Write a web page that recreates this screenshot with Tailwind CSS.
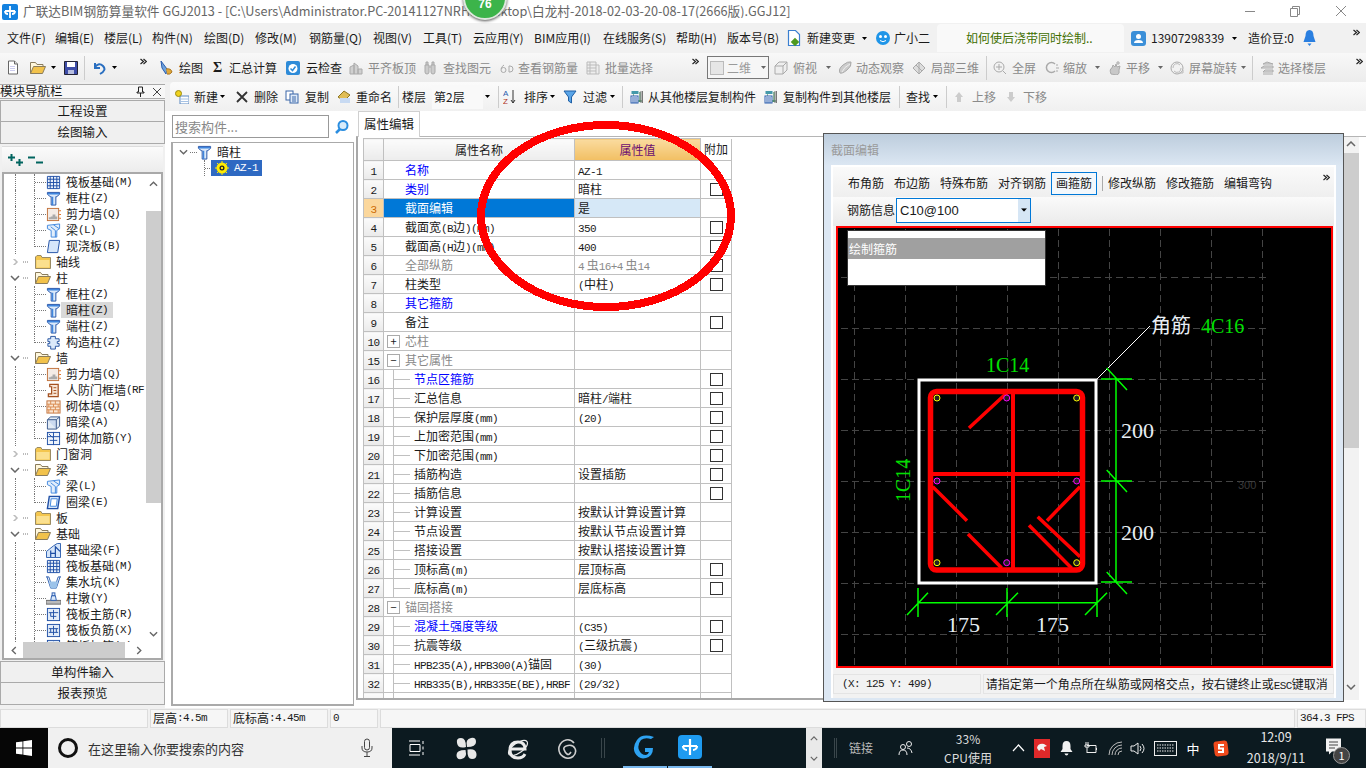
<!DOCTYPE html>
<html lang="zh">
<head>
<meta charset="utf-8">
<title>广联达BIM钢筋算量软件</title>
<script src="https://cdn.jsdelivr.net/npm/@tailwindcss/browser@4"></script>
</head>
<body class="m-0 overflow-hidden bg-[#f0f0f0]">
<svg class="hidden">
<symbol id="col" viewBox="0 0 16 16"><path d="M1.5 1.5h13v2l-3 2.5h-1v9h-5V6h-1l-3-2.5z" fill="#dbe9fa" stroke="#1f4fa5"/><path d="M2 3h12M7 6v9" stroke="#3f86de" stroke-width="1.5"/></symbol>
<symbol id="raft" viewBox="0 0 16 16"><path d="M1.5 1.5h13v13h-13zM4.5 1.5v13M8 1.5v13M11.5 1.5v13M1.5 4.5h13M1.5 8h13M1.5 11.5h13" fill="#e8f0fa" stroke="#1f4fa5"/></symbol>
<symbol id="wall" viewBox="0 0 16 16"><rect x="1.500" y="1.500" width="12" height="13" fill="#f4ece6" stroke="#c0703a"/><path d="M3 13h9v-3h-2v-2h-3v2H5v1H3z" fill="#aaa"/><path d="M14 4h2M14 8h2M14 12h2" stroke="#e06b1a"/></symbol>
<symbol id="beam" viewBox="0 0 16 16"><path d="M1.500 2.500 14.500 1v5l-3 2v7h-6V8L1.500 6z" fill="#e2eefb" stroke="#3f86de"/><path d="M5 4l5 4v7M8 2l6 4" stroke="#3f86de" fill="none"/></symbol>
<symbol id="slab" viewBox="0 0 16 16"><path d="M3.500 1.500h11l-2 13h-11z" fill="#d6e6fa" stroke="#1f4fa5"/></symbol>
<symbol id="ql" viewBox="0 0 16 16"><path d="M3.500 1.500h11l-2 13h-11z" fill="#d6e6fa" stroke="#1f4fa5" stroke-width="1.500"/><path d="M5.500 4h6.500l-1 8H4.500z" fill="#fff" stroke="#3f86de"/></symbol>
<symbol id="gz" viewBox="0 0 16 16"><path d="M5 1.500h5v2.500h4v3h-2v2h2v3h-4v3H5v-3H2V9h2V7H2V4h3z" fill="#dbe9fa" stroke="#25529f"/></symbol>
<symbol id="rfm" viewBox="0 0 16 16"><path d="M4 1.500h9v13H2.500v-3H6V4H4z" fill="#f8e5d5" stroke="#a4501f" stroke-width="1.300"/><path d="M8 5h3M8 8h3M8 11h3" stroke="#a4501f"/></symbol>
<symbol id="brick" viewBox="0 0 16 16"><rect x="1" y="2" width="14" height="13" fill="#fbe6d2" stroke="#c0703a"/><path d="M1 5.500h14M1 8.500h14M1 11.500h14M5 2v3.500M10 2v3.500M3 5.500v3M8 5.500v3M13 5.500v3M5 8.500v3M10 8.500v3M3 11.500v3.500M8 11.500v3.500M13 11.500v3.500" stroke="#d98a4f" fill="none"/></symbol>
<symbol id="anl" viewBox="0 0 16 16"><path d="M1.500 5 5 2h9.500v10L11 15H1.500z" fill="#e2ebf5" stroke="#36558a"/><path d="M1.500 5H11v10M11 5l3.500-3" stroke="#36558a" fill="#cbdaf0"/></symbol>
<symbol id="jj" viewBox="0 0 16 16"><rect x="1.500" y="1.500" width="13" height="13" fill="#eef4fb" stroke="#1f4fa5"/><path d="M1 6h14M8 1v14M4 10h8M3 3l4 4" stroke="#1f4fa5"/></symbol>
<symbol id="jcl" viewBox="0 0 16 16"><path d="M0.500 15.500V9L8 3l4-2.500h3.500v15h-15z" fill="#d6e6fa" stroke="#2a5cae"/><path d="M5 15V8M10 15V4l5 5M5 11h5" stroke="#1f4fa5" stroke-width="1.300" fill="none"/></symbol>
<symbol id="jsk" viewBox="0 0 16 16"><path d="M0 2h3l2 6h6l2-6h3M1 2l4 12h6l4-12" fill="none" stroke="#2a5cae"/><path d="M3 7h10l-2 7H5z" fill="#9cc3ea"/></symbol>
<symbol id="zd" viewBox="0 0 16 16"><rect x="0" y="10" width="16" height="4" fill="#bbb" stroke="#666"/><path d="M5 10l1-5h4l1 5z" fill="#dbe9fa" stroke="#2a5cae"/><rect x="6.500" y="2" width="3" height="3" fill="#dbe9fa" stroke="#2a5cae"/></symbol>
<symbol id="zj" viewBox="0 0 16 16"><rect x="1.500" y="1.500" width="13" height="13" fill="#e2ecf8" stroke="#1f4fa5"/><path d="M3 6h10M8 3v10M5 10V6M11 10h-6" stroke="#1f4fa5" fill="none"/></symbol>
<symbol id="fj" viewBox="0 0 16 16"><rect x="1.500" y="1.500" width="13" height="13" fill="#e2ecf8" stroke="#1f4fa5"/><path d="M3 6h10M3 10h10M8 3v10M5 6v4M11 6v4" stroke="#1f4fa5" fill="none"/></symbol>
<symbol id="fc" viewBox="0 0 16 16"><path d="M.500 3V14.500h15v-11H7L6 1.500H2z" fill="#f4c64e" stroke="#9a8b63"/><path d="M1.500 6h13v7.500h-13z" fill="#fbe08e"/></symbol>
<symbol id="fo" viewBox="0 0 16 16"><path d="M.500 13.500V2.500h5l1.500 2h6v3" fill="#fff7dc" stroke="#8a7c5c"/><path d="M.500 13.500l3-7h12l-3 7z" fill="#f2c24b" stroke="#8a7c5c"/></symbol>
<symbol id="dn" viewBox="0 0 5 3"><path d="M0 0h5L2.500 3z"/></symbol>
<symbol id="g1" viewBox="0 0 14 14"><path d="M1 13V6l4-2v9zM5 13V2l4 3v8zM9 13V8h4v5z" fill="#d0d0d0" stroke="#aaa"/></symbol>
<symbol id="g2" viewBox="0 0 14 14"><path d="M2 4h4v7a2 2 0 0 1-4 0zM8 4h4v7a2 2 0 0 1-4 0zM3 4V1h2v3M9 4V1h2v3M6 6h2" fill="#ccc" stroke="#aaa"/></symbol>
<symbol id="g3" viewBox="0 0 14 14"><circle cx="3.500" cy="9" r="2.500" fill="none" stroke="#aaa"/><path d="M4 4q-2 1-3 4M9 5v6h1q3 0 3-3t-3-3z" fill="none" stroke="#aaa"/></symbol>
<symbol id="g4" viewBox="0 0 14 14"><path d="M1 1h9v12H1zM1 4h9M1 7h9M1 10h9M4 1v12M10 4h3v9h-3" fill="#eee" stroke="#bbb"/></symbol>
<symbol id="g5" viewBox="0 0 14 14"><path d="M1 5l4-4h8v8l-4 4H1zM1 5h8v8M9 5l4-4" fill="#eee" stroke="#aaa"/></symbol>
<symbol id="g6" viewBox="0 0 14 14"><path d="M2 12Q0 8 5 4t8-3q1 4-4 8t-7 3z" fill="#ccc" stroke="#aaa"/><path d="M4 11q2-5 8-8" stroke="#eee" fill="none"/></symbol>
<symbol id="g7" viewBox="0 0 14 14"><path d="M7 1l6 6-6 6-6-6z" fill="#ddd" stroke="#aaa"/><path d="M4 4l6 6M7 1v12" stroke="#aaa"/></symbol>
<symbol id="g8" viewBox="0 0 14 14"><circle cx="6" cy="6" r="5" fill="#f2f2f2" stroke="#aaa"/><path d="M6 3v6M3 6h6M10 10l3 3" stroke="#aaa"/></symbol>
<symbol id="g9" viewBox="0 0 14 14"><path d="M10 3a5 5 0 1 0 0 7" fill="none" stroke="#aaa" stroke-width="1.500"/><path d="M11 4h2M11 7h3M11 10h2" stroke="#aaa"/></symbol>
<symbol id="g10" viewBox="0 0 14 14"><path d="M3 13q-2-5 1-6l1-3 2 2 1-3 1 3 3-1-1 4q1 4-2 5z" fill="#c8c8c8" stroke="#aaa"/><path d="M10 0v4M8 2h4" stroke="#aaa"/></symbol>
<symbol id="g11" viewBox="0 0 14 14"><circle cx="7" cy="7" r="6" fill="#f2f2f2" stroke="#aaa"/><path d="M3 7a4 4 0 0 1 7-3M11 7a4 4 0 0 1-7 3M9 12h4v-3" fill="none" stroke="#bbb"/></symbol>
<symbol id="g12" viewBox="0 0 14 14"><path d="M3 3l4-2 6 2H3zM1 7l3-2h9v2zM3 11l2-2h8v2zM3 13h10" fill="#ddd" stroke="#aaa"/></symbol>
<symbol id="ck" viewBox="0 0 7 7"><path d="M.500 1 3.500 3.500.500 6M3.500 1 6.500 3.500 3.500 6" fill="none" stroke="#222" stroke-width="1.200"/></symbol>
<symbol id="cu" viewBox="0 0 10 6"><path d="M1 5l4-4 4 4" fill="none" stroke="#666" stroke-width="1.500"/></symbol>
<symbol id="cd" viewBox="0 0 10 6"><path d="M1 1l4 4 4-4" fill="none" stroke="#666" stroke-width="1.500"/></symbol>
<symbol id="cl" viewBox="0 0 6 10"><path d="M5 1L1 5l4 4" fill="none" stroke="#666" stroke-width="1.500"/></symbol>
<symbol id="cr" viewBox="0 0 6 10"><path d="M1 1l4 4-4 4" fill="none" stroke="#666" stroke-width="1.500"/></symbol>
<symbol id="sdoc" viewBox="0 0 14 14"><path d="M2.500 .500h6l3 3v10h-9z" fill="#fff" stroke="#666"/><path d="M8.500 .500v3h3" fill="#ddd" stroke="#666"/><path d="M4 6h5M4 8h5M4 10h5" stroke="#cce"/></symbol>
<symbol id="srow" viewBox="0 0 14 14"><rect x="2.500" y="1" width="7" height="3" fill="#49a" /><path d="M4 5h1M11 2v10M9 11h4" stroke="#1a6f3a"/><rect x="2" y="6" width="7" height="7" fill="#fff" stroke="#2a5cae"/><path d="M3 8h5M3 10h5M3 12h5" stroke="#2a5cae"/><path d="M12 1v12M13.500 1v12" stroke="#777"/></symbol>
</svg>

<div class="relative w-[1366px] h-[768px] overflow-hidden flex flex-col text-xs leading-none text-[#1a1a1a] font-['Noto_Sans_CJK_SC','Liberation_Sans',sans-serif] [&_b]:font-['Liberation_Mono'] [&_b]:text-[11px] [&_b]:tracking-[-0.6px] [&_b]:leading-[10px] [&_b]:font-normal">

  <!-- title bar -->
  <div class="h-[23px] shrink-0 bg-white flex items-center text-[12.700px] text-[#666] whitespace-nowrap">
    <svg class="w-4 h-4 shrink-0 ml-[2px] mr-[5px]" viewBox="0 0 16 16"><rect width="16" height="16" rx="2" fill="#1382e0"/><path d="M8 2v12M3 7h10M3 7a3 3 0 0 0 3 3M13 7a3 3 0 0 1-3 3" stroke="#fff" stroke-width="1.800" fill="none"/></svg>
    <span class="w-[1187px] shrink-0 overflow-hidden">广联达BIM钢筋算量软件 GGJ2013 - [C:\Users\Administrator.PC-20141127NRHI\Desktop\白龙村-2018-02-03-20-08-17(2666版).GGJ12]</span>
    <svg class="w-[120px] h-[23px] shrink-0 ml-[28px]" viewBox="0 0 120 23"><path d="M7 11.500h10" stroke="#888"/><path d="M52.500 8.500h7v8h-7zM54.500 8.500V6.500h7v8h-2" fill="none" stroke="#888"/><path d="M98 6l10 10M108 6L98 16" stroke="#888"/></svg>
  </div>

  <!-- menu bar -->
  <div class="h-[30px] shrink-0 bg-[#f1f1f1] flex items-center whitespace-nowrap [&>span]:flex [&>span]:items-center [&>span]:shrink-0">
    <span class="w-[55px] pl-[7px]">文件(F)</span><span class="w-[49px]">编辑(E)</span><span class="w-[48px]">楼层(L)</span><span class="w-[52px]">构件(N)</span><span class="w-[51px]">绘图(D)</span><span class="w-[54px]">修改(M)</span><span class="w-[64px]">钢筋量(Q)</span><span class="w-[50px]">视图(V)</span><span class="w-[50px]">工具(T)</span><span class="w-[61px]">云应用(Y)</span><span class="w-[69px]">BIM应用(I)</span><span class="w-[73px]">在线服务(S)</span><span class="w-[51px]">帮助(H)</span><span class="w-[60px]">版本号(B)</span>
    <span class="w-[20px]"><svg class="w-[14px] h-[18px]" viewBox="0 0 14 18"><path d="M1.500 1.500h7l4 4v11h-11z" fill="#fff" stroke="#3a7fd0" stroke-width="1.200"/><rect x="5" y="10" width="6" height="6" transform="rotate(45 8 13)" fill="#4e9a20"/></svg></span>
    <span class="w-[68px]">新建变更<svg class="w-[5px] h-[3px] ml-[7px]"><use href="#dn"/></svg></span>
    <span class="w-[19px]"><svg class="w-4 h-4" viewBox="0 0 16 16"><circle cx="8" cy="8" r="7" fill="#1f95e8"/><circle cx="5.500" cy="6.500" r="1.500" fill="#fff"/><circle cx="10.500" cy="6.500" r="1.500" fill="#fff"/><path d="M5 10.500q3 2.500 6 0" stroke="#fff" fill="none"/></svg></span>
    <span class="w-[43px]">广小二</span>
    <span class="w-[187px] h-7 bg-[#f9f9f9] rounded-t-sm pl-[29px] text-[#3f6f00]">如何使后浇带同时绘制..</span>
    <span class="w-[7px]"></span>
    <span class="w-[20px]"><svg class="w-[15px] h-[15px]" viewBox="0 0 15 15"><rect width="15" height="15" rx="3" fill="#3b8fd8"/><circle cx="7.500" cy="5.500" r="2.500" fill="#fff"/><path d="M3 12q0-3 4.500-3t4.500 3z" fill="#fff"/></svg></span>
    <span class="w-[97px]">13907298339<svg class="w-[5px] h-[3px] ml-[8px]"><use href="#dn"/></svg></span>
    <span class="w-[55px]">造价豆:0</span>
    <span class="w-[50px]"><svg class="w-[13px] h-[17px]" viewBox="0 0 13 17"><path d="M6.500 0q4 0 4 6l2 6H.500l2-6q0-6 4-6z" fill="#2a7fe0"/><path d="M4.500 13.500h4L6.500 16z" fill="#2a7fe0"/></svg></span>
    <span class="w-[8px]"><svg class="w-[7px] h-[7px] -mt-3"><use href="#ck"/></svg></span>
  </div>

  <!-- toolbar 1 -->
  <div class="h-[29px] shrink-0 bg-[linear-gradient(#f8f8f8,#ececec)] flex items-center whitespace-nowrap [&>span]:flex [&>span]:items-center [&>span]:shrink-0 [&_svg]:shrink-0">
    <span class="w-[30px] pl-[6px]"><svg class="w-[14px] h-[15px]"><use href="#sdoc"/></svg></span>
    <span class="w-[20px]"><svg class="w-4 h-4"><use href="#fo"/></svg></span>
    <span class="w-[14px]"><svg class="w-[5px] h-[3px] ml-[1px]"><use href="#dn"/></svg></span>
    <span class="w-[20px]"><svg class="w-[14px] h-[14px]" viewBox="0 0 14 14"><path d="M.500 .500h13v13H.500z" fill="#3e4da8" stroke="#223"/><rect x="3" y="1" width="8" height="5" fill="#fff"/><rect x="4" y="9" width="6" height="4" fill="#b8bfe0"/></svg></span>
    <span class="w-[8px]"><i class="w-px h-6 bg-[#ccc]"></i></span>
    <span class="w-[20px]"><svg class="w-[14px] h-[14px]" viewBox="0 0 14 14"><path d="M3 2v5h5" fill="none" stroke="#2a6fc0" stroke-width="2"/><path d="M3 6q4-5 8-1t-3 8" fill="none" stroke="#2a6fc0" stroke-width="2"/></svg></span>
    <span class="w-[28px]"><svg class="w-[5px] h-[3px]"><use href="#dn"/></svg></span>
    <span class="w-[12px]"><svg class="w-[7px] h-[7px] -mt-3"><use href="#ck"/></svg></span>
    <span class="w-[5px]"></span>
    <span class="w-[52px] ml-[2px] gap-[6px]"><svg class="w-[14px] h-4" viewBox="0 0 14 16"><path d="M2 1l6 8-1 5-4-6z" fill="#6fa3dc" stroke="#2a5cae"/><path d="M7 9q5-1 6 3-2 3-5 2" fill="#e0a83a" stroke="#a87420"/></svg>绘图</span>
    <span class="w-[75px]"><i class="w-[18px] not-italic font-['Liberation_Serif'] font-bold text-sm pl-[2px]">Σ</i>汇总计算</span>
    <span class="w-[63px] gap-[6px]"><svg class="w-[14px] h-[14px]" viewBox="0 0 14 14"><rect width="14" height="14" rx="2" fill="#2e8bd8"/><circle cx="7" cy="7.500" r="4.500" fill="#fff"/><path d="M4.500 7.500l2 2 3-4" fill="none" stroke="#2e8bd8" stroke-width="1.500"/></svg>云检查</span>
    <span class="w-[74px] gap-[5px] text-[#8a8a8a]"><svg class="w-[14px] h-[14px]"><use href="#g1"/></svg>平齐板顶</span>
    <span class="w-[77px] gap-[6px] text-[#8a8a8a]"><svg class="w-[14px] h-[14px]"><use href="#g2"/></svg>查找图元</span>
    <span class="w-[86px] gap-[4px] text-[#8a8a8a]"><svg class="w-[14px] h-[14px]"><use href="#g3"/></svg>查看钢筋量</span>
    <span class="w-[100px] gap-[5px] text-[#8a8a8a]"><svg class="w-[14px] h-[14px]"><use href="#g4"/></svg>批量选择</span>
    <span class="w-[21px] pl-[6px]"><svg class="w-[7px] h-[7px] -mt-3"><use href="#ck"/></svg></span>
    <span class="w-[62px] h-[23px] border border-[#777] bg-[#f6f6f6] pl-[2px] gap-[3px] text-[#9a9a9a]"><i class="w-[14px] h-[14px] bg-[#e6e6e6] border border-[#bbb]"></i>二维<svg class="w-[5px] h-[3px] ml-[7px] fill-[#666]"><use href="#dn"/></svg></span>
    <span class="w-[69px] pl-[5px] gap-[5px] text-[#8a8a8a]"><svg class="w-[14px] h-[14px]"><use href="#g5"/></svg>俯视<svg class="w-[5px] h-[3px] ml-[4px] fill-[#666]"><use href="#dn"/></svg></span>
    <span class="w-[74px] gap-[4px] text-[#8a8a8a]"><svg class="w-[14px] h-[14px]"><use href="#g6"/></svg>动态观察</span>
    <span class="w-[72px] gap-[5px] text-[#8a8a8a]"><svg class="w-[14px] h-[14px]"><use href="#g7"/></svg>局部三维</span>
    <span class="w-[9px] pl-[2px]"><i class="w-px h-6 bg-[#ccc]"></i></span>
    <span class="w-[52px] gap-[5px] text-[#8a8a8a]"><svg class="w-[14px] h-[14px]"><use href="#g8"/></svg>全屏</span>
    <span class="w-[63px] gap-[4px] text-[#8a8a8a]"><svg class="w-[14px] h-[14px]"><use href="#g9"/></svg>缩放<svg class="w-[5px] h-[3px] ml-[4px] fill-[#666]"><use href="#dn"/></svg></span>
    <span class="w-[62px] gap-[4px] text-[#8a8a8a]"><svg class="w-[14px] h-[14px]"><use href="#g10"/></svg>平移<svg class="w-[5px] h-[3px] ml-[4px] fill-[#666]"><use href="#dn"/></svg></span>
    <span class="w-[80px] gap-[5px] text-[#8a8a8a]"><svg class="w-[14px] h-[14px]"><use href="#g11"/></svg>屏幕旋转<svg class="w-[5px] h-[3px] -ml-[1px] fill-[#666]"><use href="#dn"/></svg></span>
    <span class="w-[10px] pl-[2px]"><i class="w-px h-6 bg-[#ccc]"></i></span>
    <span class="w-[96px] gap-[4px] text-[#8a8a8a]"><svg class="w-[14px] h-[14px]"><use href="#g12"/></svg>选择楼层</span>
    <span class="w-[10px]"><svg class="w-[7px] h-[7px] -mt-3"><use href="#ck"/></svg></span>
  </div>

  <!-- main -->
  <div class="h-[626px] shrink-0 flex">
    <!-- left module nav -->
    <div class="w-[165px] shrink-0 flex flex-col pt-[2px]">
      <div class="h-[15px] flex items-center justify-between text-[12.500px] bg-[#f7f7f7] border-y border-[#aaa] pr-[4px]"><span>模块导航栏</span><span class="flex items-center gap-[8px]"><svg class="w-[9px] h-[11px]" viewBox="0 0 9 11"><path d="M2.500 1h4v5h1.500v1H1V6h1.500zM4.500 7v4" stroke="#222" fill="none"/></svg><svg class="w-[8px] h-[8px]" viewBox="0 0 8 8"><path d="M0 0l8 8M8 0L0 8" stroke="#444"/></svg></span></div>
      <div class="h-[22px] mt-[1px] shrink-0 flex items-center justify-center bg-[#f0f0f0] border border-[#aaa] text-[12.500px]">工程设置</div>
      <div class="h-[22px] shrink-0 flex items-center justify-center bg-[#f0f0f0] border border-[#aaa] border-t-0 text-[12.500px]">绘图输入</div>
      <div class="h-[26px] mt-[2px] shrink-0 mx-[2px] flex items-center gap-[3px] pl-[5px] bg-[linear-gradient(#fbfbfb,#ececec)] border-t border-[#ddd]">
        <svg class="w-[17px] h-[14px]" viewBox="0 0 17 14"><path d="M1 4.500h7M4.500 1v7M9 9.500h7M12.500 6v7" stroke="#00645f" stroke-width="2"/></svg>
        <svg class="w-[17px] h-[14px]" viewBox="0 0 17 14"><path d="M1 4.500h7M9 9.500h7" stroke="#00645f" stroke-width="2"/></svg>
      </div>
      <div class="h-[488px] shrink-0 mx-[2px] flex flex-col border-[2px] border-[#a9a9a9] bg-white overflow-hidden">
        <div class="flex h-[468px]">
          <div class="w-[144px] overflow-hidden whitespace-nowrap [&>div]:flex [&>div]:items-center [&>div]:h-4 [&_u]:w-[19px] [&_u]:shrink-0 [&_u]:h-4 [&_u]:ml-[11px] [&_u]:border-l [&_u]:border-dotted [&_u]:border-[#777] [&_s]:w-[12px] [&_s]:shrink-0 [&_s]:h-4 [&_s]:border-l [&_s]:border-dotted [&_s]:border-[#777] [&_s]:bg-[repeating-linear-gradient(90deg,#777_0_1px,transparent_1px_2px)] [&_s]:bg-no-repeat [&_s]:bg-[length:12px_1px] [&_s]:bg-[position:0_8px] [&_svg]:shrink-0 [&_.i]:w-[15px] [&_.i]:h-[15px] [&_.i]:mr-[5px] [&_.f]:w-4 [&_.f]:h-4 [&_.f]:mr-[5px] [&_.c]:w-[25px] [&_.c]:h-[6px] [&_.c]:ml-[6px]">
            <div><u></u><s></s><svg class="i"><use href="#raft"/></svg>筏板基础<b>(M)</b></div>
            <div><u></u><s></s><svg class="i"><use href="#col"/></svg>框柱<b>(Z)</b></div>
            <div><u></u><s></s><svg class="i"><use href="#wall"/></svg>剪力墙<b>(Q)</b></div>
            <div><u></u><s></s><svg class="i"><use href="#beam"/></svg>梁<b>(L)</b></div>
            <div><u></u><s class="!h-[9px] self-start"></s><svg class="i"><use href="#slab"/></svg>现浇板<b>(B)</b></div>
            <div><svg class="c" viewBox="0 0 25 6"><path d="M3 -1l4 4-4 4" fill="none" stroke="#bbb" stroke-width="1.500"/><path d="M13 3h6" stroke="#777" stroke-dasharray="1 1"/></svg><svg class="f"><use href="#fc"/></svg>轴线</div>
            <div><svg class="c" viewBox="0 0 25 6"><path d="M1 1l4 4 4-4" fill="none" stroke="#666" stroke-width="1.500"/><path d="M13 3h6" stroke="#777" stroke-dasharray="1 1"/></svg><svg class="f"><use href="#fo"/></svg>柱</div>
            <div><u></u><s></s><svg class="i"><use href="#col"/></svg>框柱<b>(Z)</b></div>
            <div><u></u><s></s><svg class="i"><use href="#col"/></svg><span class="-ml-[5px] pl-[5px] pr-[5px] bg-[#d9d9d9] h-4 flex items-center">暗柱<b>(Z)</b></span></div>
            <div><u></u><s></s><svg class="i"><use href="#col"/></svg>端柱<b>(Z)</b></div>
            <div><u></u><s class="!h-[9px] self-start"></s><svg class="i"><use href="#gz"/></svg>构造柱<b>(Z)</b></div>
            <div><svg class="c" viewBox="0 0 25 6"><path d="M1 1l4 4 4-4" fill="none" stroke="#666" stroke-width="1.500"/><path d="M13 3h6" stroke="#777" stroke-dasharray="1 1"/></svg><svg class="f"><use href="#fo"/></svg>墙</div>
            <div><u></u><s></s><svg class="i"><use href="#wall"/></svg>剪力墙<b>(Q)</b></div>
            <div><u></u><s></s><svg class="i"><use href="#rfm"/></svg>人防门框墙<b>(RF</b></div>
            <div><u></u><s></s><svg class="i"><use href="#brick"/></svg>砌体墙<b>(Q)</b></div>
            <div><u></u><s></s><svg class="i"><use href="#anl"/></svg>暗梁<b>(A)</b></div>
            <div><u></u><s class="!h-[9px] self-start"></s><svg class="i"><use href="#jj"/></svg>砌体加筋<b>(Y)</b></div>
            <div><svg class="c" viewBox="0 0 25 6"><path d="M3 -1l4 4-4 4" fill="none" stroke="#bbb" stroke-width="1.500"/><path d="M13 3h6" stroke="#777" stroke-dasharray="1 1"/></svg><svg class="f"><use href="#fc"/></svg>门窗洞</div>
            <div><svg class="c" viewBox="0 0 25 6"><path d="M1 1l4 4 4-4" fill="none" stroke="#666" stroke-width="1.500"/><path d="M13 3h6" stroke="#777" stroke-dasharray="1 1"/></svg><svg class="f"><use href="#fo"/></svg>梁</div>
            <div><u></u><s></s><svg class="i"><use href="#beam"/></svg>梁<b>(L)</b></div>
            <div><u></u><s class="!h-[9px] self-start"></s><svg class="i"><use href="#ql"/></svg>圈梁<b>(E)</b></div>
            <div><svg class="c" viewBox="0 0 25 6"><path d="M3 -1l4 4-4 4" fill="none" stroke="#bbb" stroke-width="1.500"/><path d="M13 3h6" stroke="#777" stroke-dasharray="1 1"/></svg><svg class="f"><use href="#fc"/></svg>板</div>
            <div><svg class="c" viewBox="0 0 25 6"><path d="M1 1l4 4 4-4" fill="none" stroke="#666" stroke-width="1.500"/><path d="M13 3h6" stroke="#777" stroke-dasharray="1 1"/></svg><svg class="f"><use href="#fo"/></svg>基础</div>
            <div><u></u><s></s><svg class="i"><use href="#jcl"/></svg>基础梁<b>(F)</b></div>
            <div><u></u><s></s><svg class="i"><use href="#raft"/></svg>筏板基础<b>(M)</b></div>
            <div><u></u><s></s><svg class="i"><use href="#jsk"/></svg>集水坑<b>(K)</b></div>
            <div><u></u><s></s><svg class="i"><use href="#zd"/></svg>柱墩<b>(Y)</b></div>
            <div><u></u><s></s><svg class="i"><use href="#zj"/></svg>筏板主筋<b>(R)</b></div>
            <div><u></u><s></s><svg class="i"><use href="#fj"/></svg>筏板负筋<b>(X)</b></div>
            <div><u></u><s></s><svg class="i"><use href="#fj"/></svg>筏板加筋<b>(Y)</b></div>
          </div>
          <div class="w-[15px] shrink-0 flex flex-col items-center">
            <svg class="w-[9px] h-[6px] mt-[7px] mb-[24px]"><use href="#cu"/></svg>
            <div class="w-full h-[292px] bg-[#cdcdcd]"></div>
            <svg class="w-[9px] h-[6px] mt-[128px]"><use href="#cd"/></svg>
          </div>
        </div>
        <div class="h-4 flex items-center">
          <svg class="w-[6px] h-[9px] ml-[7px]"><use href="#cl"/></svg>
          <div class="w-[102px] h-4 ml-[6px] bg-[#cdcdcd]"></div>
          <svg class="w-[6px] h-[9px] ml-[11px]"><use href="#cr"/></svg>
        </div>
      </div>
      <div class="h-[22px] mt-[1px] shrink-0 flex items-center justify-center bg-[#f0f0f0] border border-[#aaa] text-[12.500px]">单构件输入</div>
      <div class="h-[22px] shrink-0 flex items-center justify-center bg-[#f0f0f0] border border-[#aaa] border-t-0 text-[12.500px]">报表预览</div>
    </div>

    <!-- right column -->
    <div class="flex-1 flex flex-col min-w-0">
      <!-- toolbar 3 -->
      <div class="h-[29px] shrink-0 ml-[5px] rounded-l-sm bg-[linear-gradient(#fbfbfb,#f0f0f0)] flex items-center whitespace-nowrap [&>span]:flex [&>span]:items-center [&>span]:shrink-0 [&_svg]:shrink-0">
        <span class="w-[64px] pl-[5px] gap-[5px]"><svg class="w-[14px] h-[14px]" viewBox="0 0 14 14"><rect x="5" y="6" width="9" height="8" fill="#fff" stroke="#5b88c0"/><path d="M6 9h7M6 11.500h7" stroke="#a6c2e4"/><circle cx="3.500" cy="3.500" r="3" fill="#f0d21e" stroke="#9a8a10"/></svg>新建<svg class="w-[5px] h-[3px] ml-[-3px]"><use href="#dn"/></svg></span>
        <span class="w-[51px] gap-[6px]"><svg class="w-[12px] h-[12px] ml-[2px]" viewBox="0 0 12 12"><path d="M1 1l10 10M11 1L1 11" stroke="#333" stroke-width="1.800"/></svg>删除</span>
        <span class="w-[52px] gap-[6px]"><svg class="w-[14px] h-[14px]" viewBox="0 0 14 14"><rect x="1" y="1" width="7" height="9" fill="#fff" stroke="#3a66a8"/><rect x="5" y="4" width="8" height="9" fill="#dde9f8" stroke="#3a66a8"/><path d="M7 7h4M7 9h4M7 11h4" stroke="#3a66a8"/></svg>复制</span>
        <span class="w-[61px] gap-[5px]"><svg class="w-[14px] h-[14px]" viewBox="0 0 14 14"><path d="M1 7l6-6 6 4-6 6z" fill="#e0bd55" stroke="#8d7520"/><rect x="3" y="8" width="10" height="5" fill="#c8daf2"/></svg>重命名</span>
        <span class="w-[4px]"><i class="w-px h-[22px] bg-[#ccc]"></i></span>
        <span class="w-[30px]">楼层</span>
        <span class="w-[51px] h-[24px] bg-[#f9f9f9] pl-[2px]">第2层</span>
        <span class="w-[10px] pl-[2px]"><svg class="w-[5px] h-[3px]"><use href="#dn"/></svg></span>
        <span class="w-[10px] pl-[5px]"><i class="w-px h-[22px] bg-[#ccc]"></i></span>
        <span class="w-[60px] gap-[7px]"><svg class="w-[14px] h-4" viewBox="0 0 14 16"><text x="0" y="7" font-size="8" fill="#2a5cae" font-family="Liberation Sans">A</text><text x="0" y="15" font-size="8" fill="#b03020" font-family="Liberation Sans">Z</text><path d="M10 1v13M8 11l2 3 2-3" stroke="#333" fill="none"/></svg>排序<svg class="w-[5px] h-[3px] ml-[-5px]"><use href="#dn"/></svg></span>
        <span class="w-[56px] gap-[6px]"><svg class="w-[14px] h-[14px]" viewBox="0 0 14 14"><path d="M1 1h12L8.500 7v6l-3-2V7z" fill="#5aa5e8" stroke="#1f5fa5"/></svg>过滤<svg class="w-[5px] h-[3px] ml-[-3px]"><use href="#dn"/></svg></span>
        <span class="w-[10px] pl-[3px]"><i class="w-px h-[22px] bg-[#ccc]"></i></span>
        <span class="w-[134px] gap-[5px]"><svg class="w-[14px] h-4"><use href="#srow"/></svg>从其他楼层复制构件</span>
        <span class="w-[133px] gap-[6px]"><svg class="w-[14px] h-4"><use href="#srow"/></svg>复制构件到其他楼层</span>
        <span class="w-[10px] pl-[3px]"><i class="w-px h-[22px] bg-[#ccc]"></i></span>
        <span class="w-[37px] gap-[6px]">查找<svg class="w-[5px] h-[3px] -ml-[3px]"><use href="#dn"/></svg></span>
        <span class="w-[9px] pl-[3px]"><i class="w-px h-[22px] bg-[#ccc]"></i></span>
        <span class="w-[52px] gap-[6px] text-[#8a8a8a]"><svg class="w-[14px] h-[12px]" viewBox="0 0 14 12"><path d="M7 1l4 5H9v5H5V6H3z" fill="#ccc"/></svg>上移</span>
        <span class="gap-[5px] text-[#8a8a8a]"><svg class="w-[14px] h-[12px]" viewBox="0 0 14 12"><path d="M7 11l4-5H9V1H5v5H3z" fill="#ccc"/></svg>下移</span>
      </div>
      <div class="flex-1 flex min-h-0">
        <!-- component tree -->
        <div class="w-[191px] shrink-0 flex flex-col pl-[6px] bg-white">
          <div class="h-[31px] flex items-center pl-[1px]">
            <div class="w-[157px] h-[23px] border border-[#999] bg-white text-[#888] flex items-center pl-[2px] text-[13px]">搜索构件...</div>
            <svg class="w-[16px] h-[16px] ml-[5px]" viewBox="0 0 16 16"><circle cx="9" cy="6.500" r="4.500" fill="#d8ecfb" stroke="#2b8ee0" stroke-width="2"/><path d="M6 10l-4 4" stroke="#2b8ee0" stroke-width="2.500"/></svg>
          </div>
          <div class="h-[564px] w-[183px] border-t-[1px] border-l-[2px] border-b-[2px] border-r-[1px] border-[#aaa] pt-[1px] bg-white">
            <div class="h-4 flex items-center"><svg class="w-[9px] h-[6px] ml-[6px]"><use href="#cd"/></svg><span class="w-[7px] ml-[2px] border-t border-dotted border-[#777]"></span><svg class="w-[15px] h-[15px]"><use href="#col"/></svg><span class="ml-[5px]">暗柱</span></div>
            <div class="h-4 flex items-center ml-[31px]"><span class="w-[7px] h-4 border-l border-dotted border-[#777] bg-[repeating-linear-gradient(90deg,#777_0_1px,transparent_1px_2px)] bg-no-repeat bg-[length:7px_1px] bg-[position:0_8px]"></span><span class="w-[51px] h-4 bg-[#2e69c2] text-white flex items-center pl-[4px] gap-[5px]"><svg class="w-[14px] h-[14px]" viewBox="0 0 14 14"><circle cx="7" cy="7" r="5.500" fill="#ffeb00"/><path d="M7 0v14M0 7h14M2 2l10 10M12 2L2 12" stroke="#ffeb00"/><circle cx="7" cy="7" r="2.500" fill="#222"/><circle cx="7" cy="7" r="1.200" fill="#ffeb00"/></svg><b>AZ-1</b></span></div>
          </div>
        </div>
        <!-- property area -->
        <div class="flex-1 min-w-0 bg-white flex flex-col">
          <div class="h-[26px] shrink-0 flex border-b border-[#b5b5b5] bg-white">
            <div class="ml-[2px] w-[62px] h-[26px] border-x border-t border-[#d0d0d0] bg-white flex items-center justify-center text-[12.500px]">属性编辑</div>
          </div>
          <div class="flex-1 min-h-0 flex">
            <div class="w-[986px] h-[563px] overflow-hidden border-l-[2px] border-b-[2px] border-[#a8a8a8] pl-[5px] pt-[1px]">
              <table class="table-fixed w-[368px] border-collapse leading-[18px] [&_td]:h-[19px] [&_td]:border [&_td]:border-[#c0c0c0] [&_td]:p-0 [&_td]:whitespace-nowrap [&_td]:overflow-hidden [&_td:nth-child(1)]:text-center [&_td:nth-child(1)]:bg-[linear-gradient(#fbfbfb,#eaeaea)] [&_td:nth-child(2)]:pl-[21px] [&_td:nth-child(3)]:pl-[3px] [&_td:nth-child(4)]:text-center [&_.x]:!pl-0 [&_u]:no-underline [&_u]:inline-block [&_u]:align-top [&_u]:w-[21px] [&_u]:h-[18px] [&_u]:ml-[9px] [&_u]:mr-0 [&_u]:border-l [&_u]:border-[#c0c0c0] [&_u]:bg-[linear-gradient(#c0c0c0,#c0c0c0)] [&_u]:bg-no-repeat [&_u]:bg-[length:16px_1px] [&_u]:bg-[position:0_9px] [&_em]:not-italic [&_em]:inline-block [&_em]:w-[13px] [&_em]:h-[13px] [&_em]:border [&_em]:border-[#333] [&_em]:align-middle [&_em]:mt-[-2px] [&_a]:text-[#0000ff] [&_q]:text-[#8a8a8a] [&_q]:before:content-none [&_q]:after:content-none [&_.b]:inline-block [&_.b]:w-[13px] [&_.b]:h-[13px] [&_.b]:ml-[3px] [&_.b]:mr-[5px] [&_.b]:border [&_.b]:border-[#aaa] [&_.b]:align-middle [&_.b]:mt-[-2px] [&_.b]:text-[11px] [&_.b]:leading-[10px] [&_.b]:text-center">
                <colgroup><col class="w-[20px]"><col class="w-[191px]"><col class="w-[126px]"><col class="w-[31px]"></colgroup>
                <tr class="[&_td]:!h-[22px]"><td></td><td class="!pl-0 text-center bg-[linear-gradient(#fbfbfb,#ededed)]">属性名称</td><td class="!pl-0 text-center text-[#6b0f72] bg-[linear-gradient(#fadb9f,#f2bf62)]">属性值</td><td class="!border-t-0">附加</td></tr>
                <tr><td><b>1</b></td><td><a>名称</a></td><td><b>AZ-1</b></td><td></td></tr>
                <tr><td><b>2</b></td><td><a>类别</a></td><td>暗柱</td><td><em></em></td></tr>
                <tr><td class="!bg-none !bg-[#fbd79c] text-[#cc6a00]"><b>3</b></td><td class="bg-[#0078d7] text-white">截面编辑</td><td class="bg-[#d6e8f7]">是</td><td></td></tr>
                <tr><td><b>4</b></td><td>截面宽<b>(B</b>边<b>)(mm)</b></td><td><b>350</b></td><td><em></em></td></tr>
                <tr><td><b>5</b></td><td>截面高<b>(H</b>边<b>)(mm)</b></td><td><b>400</b></td><td><em></em></td></tr>
                <tr><td><b>6</b></td><td><q>全部纵筋</q></td><td><q><b>4</b> 虫<b>16+4</b> 虫<b>14</b></q></td><td><em></em></td></tr>
                <tr><td><b>7</b></td><td>柱类型</td><td><b>(</b>中柱<b>)</b></td><td><em></em></td></tr>
                <tr><td><b>8</b></td><td><a>其它箍筋</a></td><td></td><td></td></tr>
                <tr><td><b>9</b></td><td>备注</td><td></td><td><em></em></td></tr>
                <tr><td><b>10</b></td><td class="x"><span class="b">+</span><q>芯柱</q></td><td></td><td></td></tr>
                <tr><td><b>15</b></td><td class="x"><span class="b">−</span><q>其它属性</q></td><td></td><td></td></tr>
                <tr><td><b>16</b></td><td class="x"><u></u><a>节点区箍筋</a></td><td></td><td><em></em></td></tr>
                <tr><td><b>17</b></td><td class="x"><u></u>汇总信息</td><td>暗柱<b>/</b>端柱</td><td><em></em></td></tr>
                <tr><td><b>18</b></td><td class="x"><u></u>保护层厚度<b>(mm)</b></td><td><b>(20)</b></td><td><em></em></td></tr>
                <tr><td><b>19</b></td><td class="x"><u></u>上加密范围<b>(mm)</b></td><td></td><td><em></em></td></tr>
                <tr><td><b>20</b></td><td class="x"><u></u>下加密范围<b>(mm)</b></td><td></td><td><em></em></td></tr>
                <tr><td><b>21</b></td><td class="x"><u></u>插筋构造</td><td>设置插筋</td><td><em></em></td></tr>
                <tr><td><b>22</b></td><td class="x"><u></u>插筋信息</td><td></td><td><em></em></td></tr>
                <tr><td><b>23</b></td><td class="x"><u></u>计算设置</td><td>按默认计算设置计算</td><td></td></tr>
                <tr><td><b>24</b></td><td class="x"><u></u>节点设置</td><td>按默认节点设置计算</td><td></td></tr>
                <tr><td><b>25</b></td><td class="x"><u></u>搭接设置</td><td>按默认搭接设置计算</td><td></td></tr>
                <tr><td><b>26</b></td><td class="x"><u></u>顶标高<b>(m)</b></td><td>层顶标高</td><td><em></em></td></tr>
                <tr><td><b>27</b></td><td class="x"><u></u>底标高<b>(m)</b></td><td>层底标高</td><td><em></em></td></tr>
                <tr><td><b>28</b></td><td class="x"><span class="b">−</span><q>锚固搭接</q></td><td></td><td></td></tr>
                <tr><td><b>29</b></td><td class="x"><u></u><a>混凝土强度等级</a></td><td><b>(C35)</b></td><td><em></em></td></tr>
                <tr><td><b>30</b></td><td class="x"><u></u>抗震等级</td><td><b>(</b>三级抗震<b>)</b></td><td><em></em></td></tr>
                <tr><td><b>31</b></td><td class="x"><u></u><b>HPB235(A),HPB300(A)</b>锚固</td><td><b>(30)</b></td><td></td></tr>
                <tr><td><b>32</b></td><td class="x"><u></u><b>HRB335(B),HRB335E(BE),HRBF</b></td><td><b>(29/32)</b></td><td></td></tr>
                <tr><td><b>33</b></td><td class="x"><u></u><b>HRB400(C),HRB400E(CE),HRBF</b></td><td><b>(34/37)</b></td><td></td></tr>
              </table>
            </div>
            <!-- main scrollbar -->
            <div class="w-[16px] shrink-0 ml-[1px] flex flex-col items-center h-[563px] bg-[#f2f2f2]">
              <svg class="w-[10px] h-[6px] mt-[4px] mb-[6px]"><use href="#cu"/></svg>
              <div class="w-full h-[295px] bg-[#cdcdcd]"></div>
              <svg class="w-[10px] h-[6px] mt-[236px]"><use href="#cd"/></svg>
            </div>
          </div>
        </div>
      </div>
    </div>
  </div>

  <!-- status bar -->
  <div class="h-[20px] shrink-0 flex items-center gap-[2px] bg-[#f0f0f0] [&>span]:h-[19px] [&>span]:flex [&>span]:items-center [&>span]:border [&>span]:border-[#dcdcdc] [&>span]:bg-[#f6f6f6] [&>span]:pl-[2px] [&>span]:whitespace-nowrap">
    <span class="w-[148px]"></span><span class="w-[78px]">层高<b>:4.5m</b></span><span class="w-[98px]">底标高<b>:4.45m</b></span><span class="w-[48px]"><b>0</b></span><span class="w-[915px]"></span><span class="w-[69px]"><b>364.3 FPS</b></span>
  </div>

  <!-- taskbar -->
  <div class="h-[40px] shrink-0 flex items-center bg-[#0c1a20] text-white whitespace-nowrap [&>span]:flex [&>span]:shrink-0 [&>span]:items-center [&>span]:justify-center">
    <span class="w-[48px] h-10 bg-[#060606]"><svg class="w-[16px] h-[16px]" viewBox="0 0 16 16" fill="#fff"><path d="M0 2.300l6.500-.9v6.200H0zM7.300 1.300 16 0v7.600H7.300zM0 8.400h6.500v6.200L0 13.700zM7.300 8.400H16V16l-8.700-1.200z"/></svg></span>
    <span class="w-[344px] h-10 bg-[#f0f0f0] !justify-start text-[#333] text-[13px]"><svg class="w-[22px] h-[22px] ml-[9px] mr-[9px]" viewBox="0 0 22 22"><circle cx="11" cy="11" r="8.500" fill="none" stroke="#111" stroke-width="3"/></svg>在这里输入你要搜索的内容<svg class="w-[12px] h-[20px] ml-[117px]" viewBox="0 0 12 20"><rect x="3.500" y="1" width="5" height="11" rx="2.500" fill="none" stroke="#444"/><path d="M1 8v2q0 4 5 4t5-4V8M6 14v4M3 18.500h6" fill="none" stroke="#444"/></svg></span>
    <span class="w-[48px]"><svg class="w-[17px] h-[16px]" viewBox="0 0 17 16"><path d="M1 1h11M1 15h11M2 4.500h10v7H2zM15 1v3M15 6.500v3M15 12v3" fill="none" stroke="#fff"/></svg></span>
    <span class="w-[52px]"><svg class="w-[23px] h-[23px]" viewBox="0 0 23 23" fill="#e8e8e8"><path d="M11 10Q3 12 2 6 1 1 6 1q5 0 5 9zM12 10q-2-8 4-9 5-1 5 4 0 5-9 5zM12.500 12.500Q21 11 21.500 17q.5 5-4.500 5-5 0-4.500-9.500zM10.500 13q2 8-4 9-5 1-5-4 0-5 9-5z"/></svg></span>
    <span class="w-[52px]"><svg class="w-[24px] h-[25px]" viewBox="0 0 24 25"><path d="M4 13h15q0-7-7-7-8 0-8 8t8 8q5 0 7-4" fill="none" stroke="#ececec" stroke-width="3"/><ellipse cx="12" cy="12" rx="11" ry="5" transform="rotate(-35 12 12)" fill="none" stroke="#ececec" stroke-width="1.200"/></svg></span>
    <span class="w-[46px]"><svg class="w-[21px] h-[21px]" viewBox="0 0 21 21"><path d="M17 5q-3-4-8-3T2 9q-1 6 4 9.500t10 0q4-4 2-8t-7-3-4 4 3 4.500 4-2" fill="none" stroke="#cfcfcf" stroke-width="1.600"/></svg></span>
    <span class="w-[33px] !justify-start pl-[11px]"><i class="w-[4px] h-[20px] border-x border-[#3a464b]"></i></span>
    <span class="w-[44px] h-10 border-b-2 border-[#78b8ee]"><svg class="w-[24px] h-[26px]" viewBox="0 0 24 26"><path d="M21 3Q9-1 4 6t-2 13q4 7 11 5t7-10H12v4h4q-1 3-3 3-5 0-7-5t2-10q4-3 10-1z" fill="#2ea3f2"/></svg></span>
    <span class="w-[44px] h-10 ml-[1px] border-b-2 border-[#78b8ee]"><svg class="w-[24px] h-[24px]" viewBox="0 0 24 24"><rect width="24" height="24" rx="4" fill="#1e9bf0"/><path d="M12 4v16M5 11h14M5 11a4 4 0 0 0 4 4M19 11a4 4 0 0 1-4 4" stroke="#fff" stroke-width="2.200" fill="none"/></svg></span>
    <span class="w-[94px]"></span>
    <span class="w-[16px] h-10 flex-col !justify-around bg-[#e9e9e9]"><svg class="w-[8px] h-[5px]"><use href="#cu"/></svg><svg class="w-[8px] h-[5px]"><use href="#cd"/></svg></span>
    <span class="w-[27px] !justify-end"><i class="w-[3px] h-[20px] border-x border-[#3a464b] mr-[12px]"></i></span>
    <span class="w-[49px] !justify-start text-[#bbb]">链接</span>
    <span class="w-[30px] !justify-start"><svg class="w-[15px] h-[16px]" viewBox="0 0 15 16" fill="none" stroke="#eee"><circle cx="5" cy="7" r="2.500"/><circle cx="11" cy="4" r="2.500"/><path d="M1 15q0-5 4-5t4 5M9 8q4 0 5 5"/></svg></span>
    <span class="w-[80px] flex-col text-[#ddd] gap-[7px] pt-[1px]"><span>33%</span><span>CPU使用</span></span>
    <span class="w-[20px]"><svg class="w-[13px] h-[8px]" viewBox="0 0 13 8"><path d="M1 7l5.500-6L12 7" fill="none" stroke="#fff" stroke-width="1.200"/></svg></span>
    <span class="w-[28px]"><svg class="w-[16px] h-[19px]" viewBox="0 0 16 19"><rect width="16" height="19" fill="#e0292a"/><path d="M3 9q1-5 7-4l3 2-3 1 1 4-4-2-2 2z" fill="#f3f3f3"/></svg></span>
    <span class="w-[20px]"><svg class="w-[13px] h-[16px]" viewBox="0 0 13 16" fill="#f1f1f1"><path d="M6.500 1q4 0 4 5v3l2 3H.500l2-3V6q0-5 4-5z"/><path d="M4.500 13.500h4Q8 15.500 6.500 15.500t-2-2z"/></svg></span>
    <span class="w-[28px]"><svg class="w-[16px] h-[14px]" viewBox="0 0 16 14" fill="none" stroke="#eee"><path d="M4 1v3M6 1v3M3 4h4v2H3zM5 6v6M5 4.500h9v7H5M14.500 7v2"/></svg></span>
    <span class="w-[22px]"><svg class="w-[15px] h-[15px]" viewBox="0 0 15 15" fill="none" stroke="#bbb"><path d="M1 14a13 13 0 0 1 13-13M4 14a10 10 0 0 1 10-10M7 14a7 7 0 0 1 7-7M10 14a4 4 0 0 1 4-4"/></svg></span>
    <span class="w-[22px]"><svg class="w-[15px] h-[15px]" viewBox="0 0 15 15" fill="none" stroke="#eee"><path d="M1 5h3l4-3v11l-4-3H1zM10 5q2 2.500 0 5M12 3q4 4.500 0 9"/></svg></span>
    <span class="w-[34px]"><svg class="w-[23px] h-[15px]" viewBox="0 0 23 15" fill="none" stroke="#eee"><rect x=".500" y=".500" width="22" height="14"/><path d="M3 4h17M3 7h17M3 10h17" stroke-dasharray="1.500 1" /></svg></span>
    <span class="w-[22px] text-[13px]">中</span>
    <span class="w-[34px]"><svg class="w-[16px] h-[17px]" viewBox="0 0 16 17"><rect x="1" y="1" width="14" height="15" rx="3" transform="rotate(-7 8 8)" fill="#f04a1c"/><path d="M11 5H6v3.500h4V12H5" fill="none" stroke="#fff" stroke-width="2"/></svg></span>
    <span class="w-[76px] flex-col gap-[9px] text-[12.500px] pb-[1px] text-[#e8e8e8]"><span>12:09</span><span>2018/9/11</span></span>
    <span class="w-[52px] h-10 relative !justify-start pl-[10px]"><svg class="w-[20px] h-[22px]" viewBox="0 0 20 22"><path d="M2 1.500h15v13H8l-3 3v-3H2z" fill="#f2f2f2"/><path d="M5 5h9M5 8h9M5 11h6" stroke="#444"/></svg><i class="absolute left-[19px] top-[19px] w-[17px] h-[17px] rounded-full bg-[#444] border border-[#999] not-italic text-[11px] flex items-center justify-center">1</i></span>
  </div>

  <!-- floating dialog -->
  <div class="absolute left-[823px] top-[133px] w-[521px] h-[569px] border border-[#555] flex flex-col bg-[linear-gradient(#bdcddd_0,#dce7f3_32px,#dce7f3_100%)]">
    <div class="h-[31px] shrink-0 flex items-center pl-[7px] text-[#9a9a9a]">截面编辑</div>
    <div class="mx-[7px] w-[505px] h-[533px] bg-[#f2f2f2] border-2 border-white border-b-0 flex flex-col">
      <div class="h-[30px] shrink-0 flex items-center pt-[2px] pl-[15px] bg-[linear-gradient(#fafafa,#efefef)] whitespace-nowrap [&>span]:flex [&>span]:items-center [&>span]:shrink-0">
        <span class="w-[46px]">布角筋</span><span class="w-[46px]">布边筋</span><span class="w-[58px]">特殊布筋</span><span class="w-[53px]">对齐钢筋</span>
        <span class="w-[46px] h-[23px] border border-[#0078d7] justify-center bg-[#f3f8fc]">画箍筋</span>
        <span class="w-[11px] justify-center"><i class="w-px h-[15px] bg-[#aaa]"></i></span>
        <span class="w-[58px]">修改纵筋</span><span class="w-[58px]">修改箍筋</span><span class="w-[99px]">编辑弯钩</span>
        <svg class="w-[7px] h-[7px] -mt-3"><use href="#ck"/></svg>
      </div>
      <div class="h-[29px] shrink-0 flex items-center pb-[3px] pl-[14px] bg-[linear-gradient(#fafafa,#eaeaea)]">
        <span class="w-[49px]">钢筋信息</span>
        <div class="w-[135px] h-[25px] border border-[#0078d7] bg-white flex items-center justify-between pl-[3px] text-[13px] font-['Liberation_Sans']">C10@100<span class="w-[12px] h-[23px] bg-[#d6e6f5] flex items-center justify-center"><svg class="w-[6px] h-[4px]" viewBox="0 0 5 3"><use href="#dn"/></svg></span></div>
      </div>
      <div class="relative h-[442px] w-[497px] ml-[3px] shrink-0 bg-black">
        <svg class="block w-[497px] h-[442px]" viewBox="836 226 497 442" font-family="Liberation Serif,Noto Sans CJK SC,serif">
          <g stroke="#444" stroke-dasharray="7 4" fill="none">
            <path d="M854.500 229V668M905.500 229V668M956.500 229V668M1007.500 229V668M1058.500 229V668M1109.500 229V668M1160.500 229V668M1211.500 229V668M1262.500 229V668"/>
            <path d="M841 277.500H1270M841 328.500H1270M841 379.500H1270M841 430.500H1270M841 481.500H1270M841 532.500H1270M841 583.500H1270M841 634.500H1270"/>
          </g>
          <text x="1238" y="489" font-size="11" fill="#3a3a3a" font-family="Liberation Sans">300</text>
          <path d="M1097 379 1150 326" stroke="#fff"/>
          <rect x="919" y="380" width="177" height="203" fill="none" stroke="#fff" stroke-width="3"/>
          <g fill="none" stroke="#ff0000">
            <rect x="930.500" y="391.500" width="152" height="178.500" rx="6" stroke-width="5.500"/>
            <path d="M1013 392V570M931 474H1082" stroke-width="4"/>
            <path d="M1006.700 393 969 428M932.700 486.700 967 520.700M968 534 1001.700 568M1080 486.700 1047 520.700M1037.700 516.700 1080 556.700M1029 525.300 1071.700 568.300" stroke-width="3.500"/>
          </g>
          <g fill="#222" stroke="#ffff00"><circle cx="937" cy="398" r="3"/><circle cx="1076.700" cy="398" r="3"/><circle cx="937" cy="562.700" r="3"/><circle cx="1076.700" cy="562.700" r="3"/></g>
          <g fill="#222" stroke="#ff00ff"><circle cx="1006.700" cy="398" r="3"/><circle cx="937" cy="481" r="3"/><circle cx="1076.700" cy="481" r="3"/><circle cx="1006.700" cy="562.700" r="3"/></g>
          <g stroke="#00ff00" stroke-width="1.500" fill="none">
            <path d="M1116 379V582M1101 379h31M1101 481h31M1101 582h31M1106.700 368l20.300 22M1106.700 470l20.300 22M1106.700 572l20.300 22"/>
            <path d="M918 602.700H1097M918 588v29M1007 588v29M1097 588v29M907 615l21-22.300M996 615l22-22.300M1085 615l22-22.300"/>
          </g>
          <g fill="#e8eef4" font-size="22"><text x="1121" y="438">200</text><text x="1121" y="540">200</text><text x="947" y="632">175</text><text x="1036" y="632">175</text><text x="1151" y="333" font-size="20">角筋</text></g>
          <g fill="#00e000" font-size="20"><text x="986" y="372">1C14</text><text x="1201" y="333">4C16</text><text transform="translate(910 502) rotate(-90)">1C14</text></g>
          <rect x="837" y="227" width="495" height="440" fill="none" stroke="#ff0000" stroke-width="2"/>
        </svg>
        <div class="absolute left-[11px] top-[4px] w-[199px] h-[56px] bg-white border border-[#333] pt-[7px]"><div class="h-[21px] bg-[#a0a0a0] text-white flex items-center pl-[1px]">绘制箍筋</div></div>
      </div>
      <div class="h-[28px] flex items-end gap-[2px] pb-[2px] whitespace-nowrap">
        <div class="w-[148px] h-[20px] border border-[#e4e4e4] flex items-center pl-[8px]"><b>(X: 125 Y: 499)</b></div>
        <div class="w-[352px] h-[20px] border border-[#e4e4e4] flex items-center pl-[2px]"><span>请指定第一个角点所在纵筋或网格交点，按右键终止或<b>ESC</b>键取消</span></div>
      </div>
    </div>
  </div>

  <!-- update badge -->
  <div class="absolute left-[463px] top-[-24px] w-[44px] h-[44px] rounded-full bg-[#3cb44a] border-2 border-[#dfe8df] shadow-[0_1px_3px_#555] flex items-end justify-center pb-[6px] text-white text-xs font-bold font-['Liberation_Sans']">76</div>

  <!-- hand-drawn red mark -->
  <svg class="absolute left-0 top-0 w-[1366px] h-[768px] pointer-events-none" viewBox="0 0 1366 768" shape-rendering="crispEdges"><ellipse cx="606" cy="216" rx="125" ry="91" fill="none" stroke="#ff0000" stroke-width="8"/></svg>
</div>
</body>
</html>
